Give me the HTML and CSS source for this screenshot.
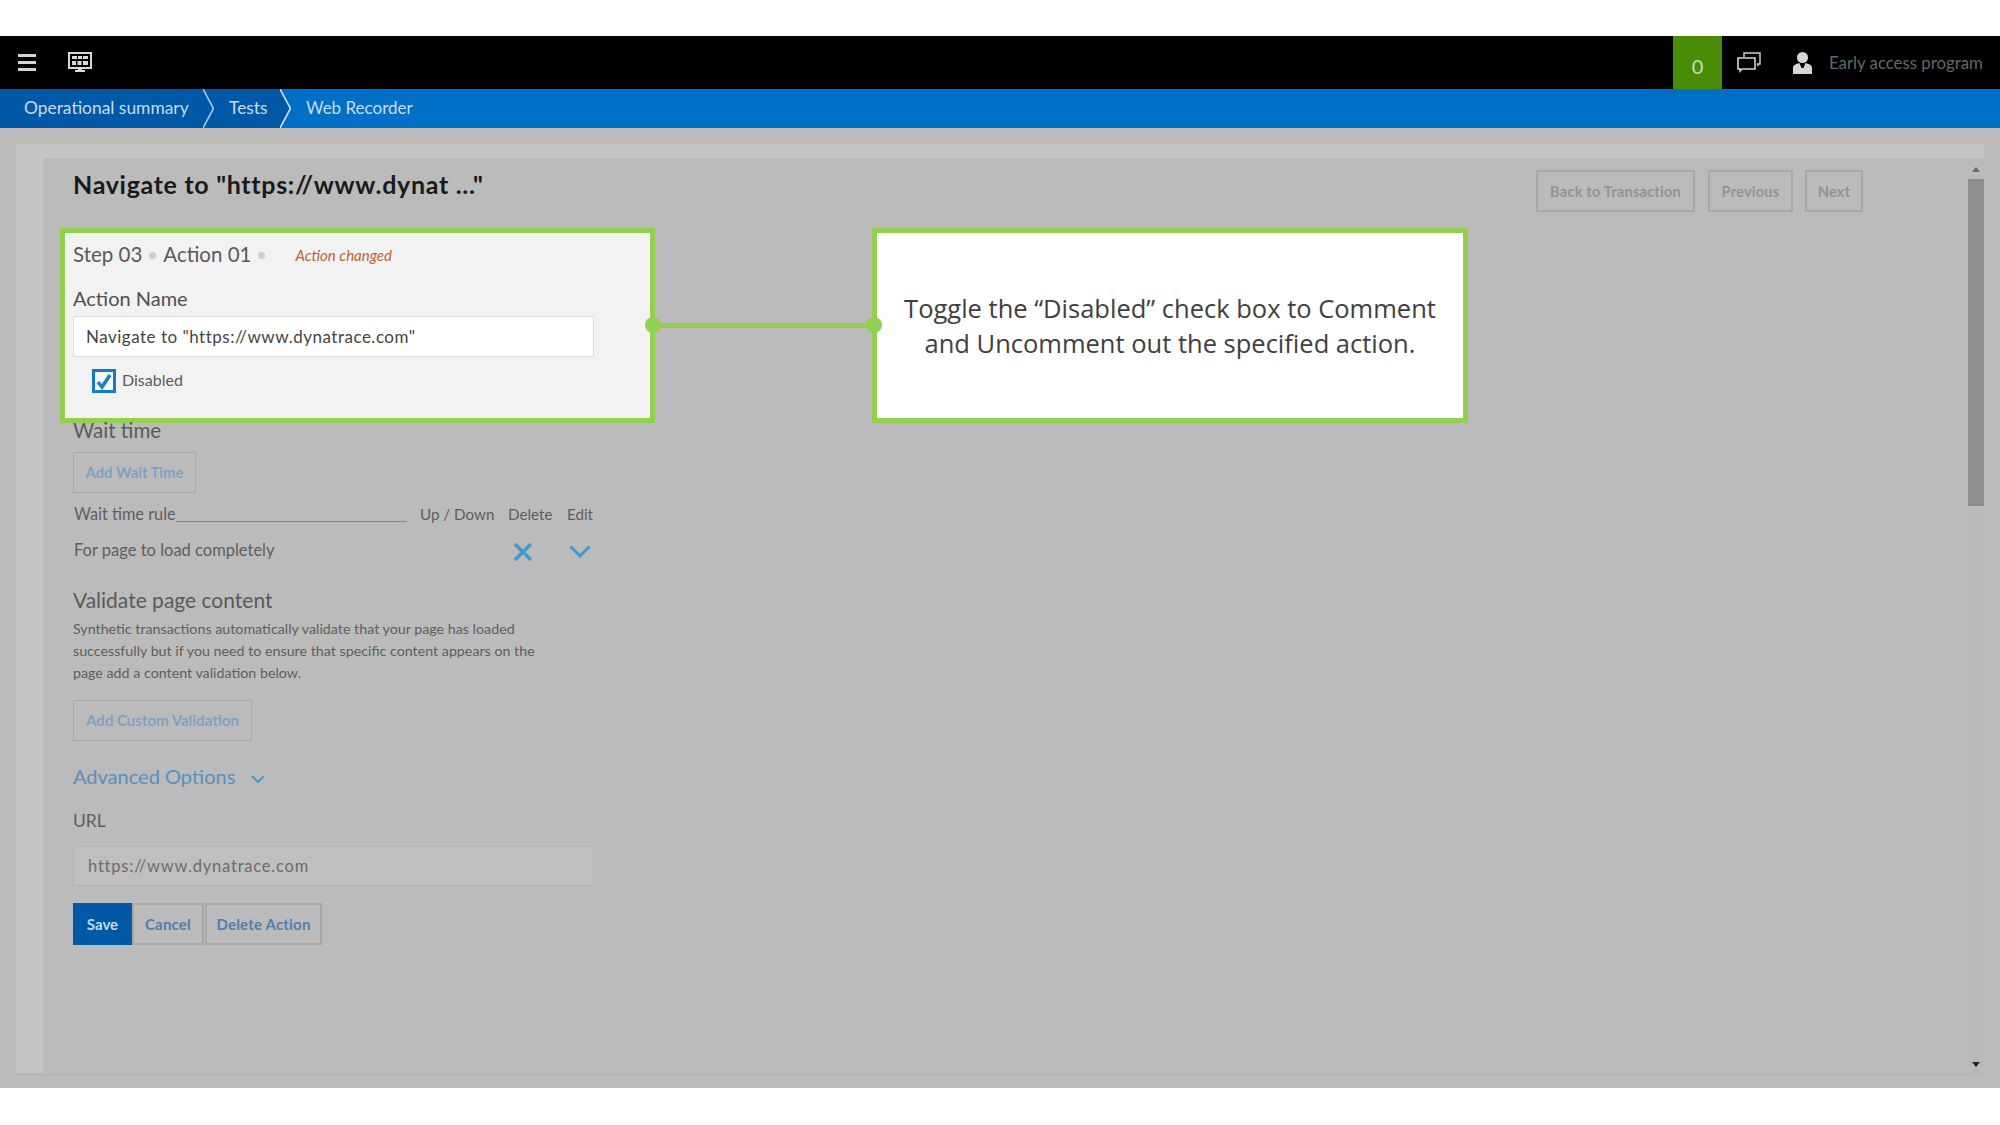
FILE: index.html
```html
<!DOCTYPE html>
<html lang="en">
<head>
<meta charset="utf-8">
<title>Web Recorder</title>
<link rel="stylesheet" href="styles.css">
</head>
<body>
<div class="app">
  <header class="topbar">
    <svg class="ic-menu" viewBox="0 0 18 17" width="18" height="17"><path d="M0 1.500h18M0 8.500h18M0 15.500h18" stroke="#d4d4d4" stroke-width="3"/></svg>
    <svg class="ic-monitor" viewBox="0 0 24 21" width="24" height="21"><rect x="1" y="1" width="22" height="15" fill="none" stroke="#d8d8d8" stroke-width="2"/><path d="M4 4h5v3H4zM10 4h4v3h-4zM15 4h5v3h-5zM4 9h4v4H4zM9.500 9h4v4h-4zM15 9h5v4h-5z" fill="#d8d8d8"/><path d="M10 16h4v2h3v2H7v-2h3z" fill="#d8d8d8"/></svg>
    <div class="status">0</div>
    <svg class="ic-chat" viewBox="0 0 24 21" width="24" height="21"><path d="M7 5V1h16v11h-3" fill="none" stroke="#d4d4d4" stroke-width="1.400"/><path d="M1 6h17v11H5l-2 2v-2H1z" fill="none" stroke="#d4d4d4" stroke-width="1.600"/><path d="M19.500 12.500h3l-2 2z" fill="#d4d4d4"/></svg>
    <svg class="ic-user" viewBox="0 0 19 22" width="19" height="22"><circle cx="9.500" cy="5.500" r="5.500" fill="#d6d6d6"/><path d="M0 22v-6c0-3 3-4 6.500-5l2 5h2l2-5c3.500 1 6.500 2 6.500 5v6z" fill="#d6d6d6"/></svg>
    <span class="early">Early access program</span>
  </header>

  <nav class="crumbs">
    <a class="crumb crumb-first">Operational summary</a>
    <svg class="sep sep-dark" viewBox="0 0 11 39" width="11" height="39"><path d="M0 0l10.500 19.500L0 39z" fill="#0058a6"/><path d="M0 0l10.500 19.500L0 39" fill="none" stroke="#a9c6e2" stroke-width="1.600"/></svg>
    <a class="crumb crumb-mid">Tests</a>
    <svg class="sep sep-light" viewBox="0 0 11 39" width="11" height="39"><path d="M0 0l10.500 19.500L0 39z" fill="#0058a6"/><path d="M0 0l10.500 19.500L0 39" fill="none" stroke="#cfe0f0" stroke-width="1.600"/></svg>
    <a class="crumb crumb-current">Web Recorder</a>
  </nav>

  <main class="stage">
    <div class="panel">
      <div class="inner">
        <div class="content">
          <div class="head">
            <h1 class="title">Navigate to "https://www.dynat ..."</h1>
            <div class="head-actions">
              <button class="btn btn-head btn-back">Back to Transaction</button>
              <button class="btn btn-head btn-prev">Previous</button>
              <button class="btn btn-head btn-next">Next</button>
            </div>
          </div>

          <section class="highlight">
            <div class="step">
              <span>Step 03</span><i class="dot"></i><span>Action 01</span><i class="dot"></i>
              <em class="changed">Action changed</em>
            </div>
            <h2 class="h-name">Action Name</h2>
            <div class="field field-name">Navigate to "https://www.dynatrace.com"</div>
            <label class="check-row">
              <svg class="check" viewBox="0 0 24 24" width="24" height="24"><rect x="1.500" y="1.500" width="21" height="21" fill="#f4f8fb" stroke="#0f7cc4" stroke-width="3"/><path d="M6 13l4 5 8-12" fill="none" stroke="#1c80c2" stroke-width="3.600"/></svg>
              <span>Disabled</span>
            </label>
          </section>

          <h2 class="h-wait">Wait time</h2>
          <button class="btn btn-add btn-wait">Add Wait Time</button>

          <div class="rules rules-head">
            <div class="rule-name"><span>Wait time rule</span><i class="rule-line"></i></div>
            <span>Up / Down</span><span>Delete</span><span>Edit</span>
          </div>
          <div class="rules rules-row">
            <div class="rule-label">For page to load completely</div>
            <span></span>
            <svg class="ic-x" viewBox="0 0 20 20" width="20" height="20"><path d="M2 2l16 16M18 2L2 18" stroke="#3f9ccd" stroke-width="3.600"/></svg>
            <svg class="ic-down" viewBox="0 0 22 13" width="22" height="13"><path d="M1.500 1.500L11 11l9.500-9.500" fill="none" stroke="#3f9ccd" stroke-width="3"/></svg>
          </div>

          <h2 class="h-validate">Validate page content</h2>
          <p class="note">Synthetic transactions automatically validate that your page has loaded<br>successfully but if you need to ensure that specific content appears on the<br>page add a content validation below.</p>
          <button class="btn btn-add btn-custom">Add Custom Validation</button>

          <div class="advanced">
            <span>Advanced Options</span>
            <svg viewBox="0 0 14 9" width="14" height="9"><path d="M1 1l6 6 6-6" fill="none" stroke="#3f9ccd" stroke-width="2"/></svg>
          </div>
          <h2 class="h-url">URL</h2>
          <div class="field field-url">https://www.dynatrace.com</div>
          <div class="actions">
            <button class="btn btn-save">Save</button>
            <button class="btn btn-act btn-cancel">Cancel</button>
            <button class="btn btn-act btn-delete">Delete Action</button>
          </div>
        </div>
        <div class="scroll">
          <i class="arrow-up"></i>
          <div class="thumb"></div>
          <i class="arrow-down"></i>
        </div>
      </div>
    </div>
  </main>
</div>

<aside class="callout">Toggle the “Disabled” check box to Comment<br>and Uncomment out the specified action.</aside>
<div class="connector"></div>
<i class="node node-left"></i>
<i class="node node-right"></i>
</body>
</html>
```

FILE: styles.css
```css
* { box-sizing: border-box; }
html, body { margin: 0; padding: 0; }
body {
  position: relative;
  width: 2000px;
  height: 1125px;
  overflow: hidden;
  padding: 36px 0 37px;
  background: #fff;
  font-family: Lato, "Liberation Sans", sans-serif;
  color: #555;
}
.app { height: 1052px; display: flex; flex-direction: column; background: #bbb; }

.topbar { height: 53px; flex: none; display: flex; align-items: center; background: #000; padding-left: 18px; padding-right: 18px; }
.ic-monitor { margin-left: 32px; }
.status { margin-left: auto; width: 49px; height: 53px; background: #488c08; color: #c9dfbb; font-size: 20px; line-height: 60px; text-align: center; }
.ic-chat { margin-left: 15px; }
.ic-user { margin-left: 32px; }
.early { margin-left: 17px; width: 153px; white-space: nowrap; color: #666; font-size: 16.800px; }

.crumbs { height: 39px; flex: none; display: flex; background: #006fc6; color: #c9dcee; font-size: 17.400px; line-height: 37px; }
.crumb { display: block; white-space: nowrap; }
.crumb-first { background: #0058a6; width: 203px; padding-left: 24px; }
.crumb-mid { background: #0058a6; width: 66px; padding-left: 15px; }
.crumb-current { padding-left: 15px; font-size: 17px; }
.sep { flex: none; display: block; }
.sep-dark { background: #0058a6; }
.sep-light { background: #006fc6; }

.stage { flex: 1; min-height: 0; padding: 16px 16px 15px; }
.panel { height: 100%; background: #c5c5c5; border-radius: 3px 3px 0 0; padding: 14px 0 0 27px; box-shadow: 0 3px 0 #b6b8b6; }
.inner { height: 100%; display: flex; background: #bbb; }
.content { flex: 1; padding-left: 30px; min-width: 0; }
.scroll { position: relative; width: 16px; flex: none; background: #bababa; }
.thumb { position: absolute; left: 0; top: 21px; width: 16px; height: 327px; background: #8e8e8e; }
.arrow-up, .arrow-down { position: absolute; left: 4px; width: 0; height: 0; border-left: 4.500px solid transparent; border-right: 4.500px solid transparent; }
.arrow-up { top: 9px; border-bottom: 5px solid #6a6a6a; }
.arrow-down { bottom: 6px; border-top: 5px solid #222; }

.head { display: flex; padding-top: 11px; height: 70px; }
.title { margin: 0; font-size: 25px; font-weight: 700; line-height: 30px; color: #1a1a1a; white-space: nowrap; letter-spacing: .69px; }
.head-actions { margin-left: auto; margin-right: 105px; margin-top: 1px; display: flex; }
.btn { display: block; margin: 0; padding: 0; font-family: inherit; background: transparent; border: 2px solid #a8a8a8; font-weight: 700; white-space: nowrap; text-align: center; }
.btn-head { height: 42px; color: #8f9397; font-size: 14.600px; letter-spacing: .2px; }
.btn-back { width: 159px; }
.btn-prev { width: 85px; margin-left: 13px; }
.btn-next { width: 58px; margin-left: 12px; }

.highlight { margin-left: -13px; width: 595px; height: 195px; border: 5px solid #92d050; background: #f2f2f2; padding: 9px 8px 0; }
.step { display: flex; align-items: center; height: 24px; font-size: 20.500px; color: #5a5a5a; }
.dot { width: 7px; height: 7px; margin: 3px 7px 0; border-radius: 50%; background: #cfcfcf; }
.changed { margin-left: 23px; margin-top: 2px; font-size: 15px; color: #c0622a; }
h2 { margin: 0; font-weight: 400; }
.h-name { margin-top: 20px; font-size: 20px; line-height: 24px; color: #505050; }
.field { width: 521px; background: #fff; border: 1px solid #ddd; white-space: nowrap; }
.field-name { margin-top: 6px; height: 41px; padding-left: 12px; font-size: 17px; line-height: 39px; color: #444; letter-spacing: .5px; }
.check-row { display: flex; align-items: center; margin-top: 12px; margin-left: 19px; height: 24px; font-size: 16px; line-height: 22px; color: #5a5a5a; }
.check-row span { margin-left: 6px; padding-bottom: 2px; }

.h-wait { margin-top: -5px; font-size: 20.500px; line-height: 24px; color: #5a5a5a; }
.btn-add { color: #7fa1c1; font-size: 15px; font-weight: 700; height: 41px; border-width: 1.500px; padding-bottom: 2px; }
.btn-wait { margin-top: 10px; width: 123px; font-size: 14.800px; }
.rules { display: grid; grid-template-columns: 346px 88px 59px auto; padding-left: 1px; font-size: 15.200px; line-height: 20px; color: #5e5e5e; width: 525px; }
.rules-head { margin-top: 11px; }
.rule-name { display: flex; margin-right: 13px; font-size: 16.300px; }
.rule-line { flex: 1; height: 17px; margin-top: 1px; border-bottom: 1px solid #8a8a8a; }
.rules-row { margin-top: 16px; height: 20px; grid-auto-rows: 20px; }
.rule-label { font-size: 16.500px; white-space: nowrap; }
.ic-x { margin: 2px 0 0 5px; }
.ic-down { margin: 5px 0 0 2px; }
.h-validate { margin-top: 28px; font-size: 21px; line-height: 24px; color: #5a5a5a; }
.note { margin: 6px 0 0; font-size: 14.250px; line-height: 22px; color: #5e5e5e; white-space: nowrap; }
.btn-custom { margin-top: 16px; width: 179px; }
.advanced { display: flex; align-items: center; margin-top: 23px; height: 24px; font-size: 20px; color: #5b8fba; }
.advanced svg { margin: 6px 0 0 16px; }
.h-url { margin-top: 21px; font-size: 17.500px; line-height: 24px; color: #5e5e5e; }
.field-url { margin-top: 13px; height: 40px; padding-left: 14px; background: #bfbfbf; border-color: #b3b3b3; font-size: 16.500px; line-height: 38px; color: #6c6c6c; letter-spacing: .8px; }
.actions { margin-top: 17px; display: flex; height: 42px; }
.btn-save { width: 59px; border: 0; background: #0058a6; color: #c6d8ea; font-size: 15px; }
.btn-act { color: #4f7fb0; font-size: 15px; letter-spacing: .2px; }
.btn-cancel { width: 72px; }
.btn-delete { width: 117px; margin-left: 1px; }

.connector { position: absolute; left: 655px; top: 323px; width: 218px; height: 5px; background: #92d050; }
.node { position: absolute; top: 317px; width: 16px; height: 16px; border-radius: 50%; background: #92d050; }
.node-left { left: 645px; }
.node-right { left: 866px; }
.callout {
  position: absolute; left: 872px; top: 228px; width: 596px; height: 195px;
  display: flex; align-items: center; justify-content: center; text-align: center;
  border: 5px solid #92d050; background: #fff; color: #404040;
  font-family: "Open Sans", sans-serif; font-size: 25.500px; line-height: 35px;
}
```
